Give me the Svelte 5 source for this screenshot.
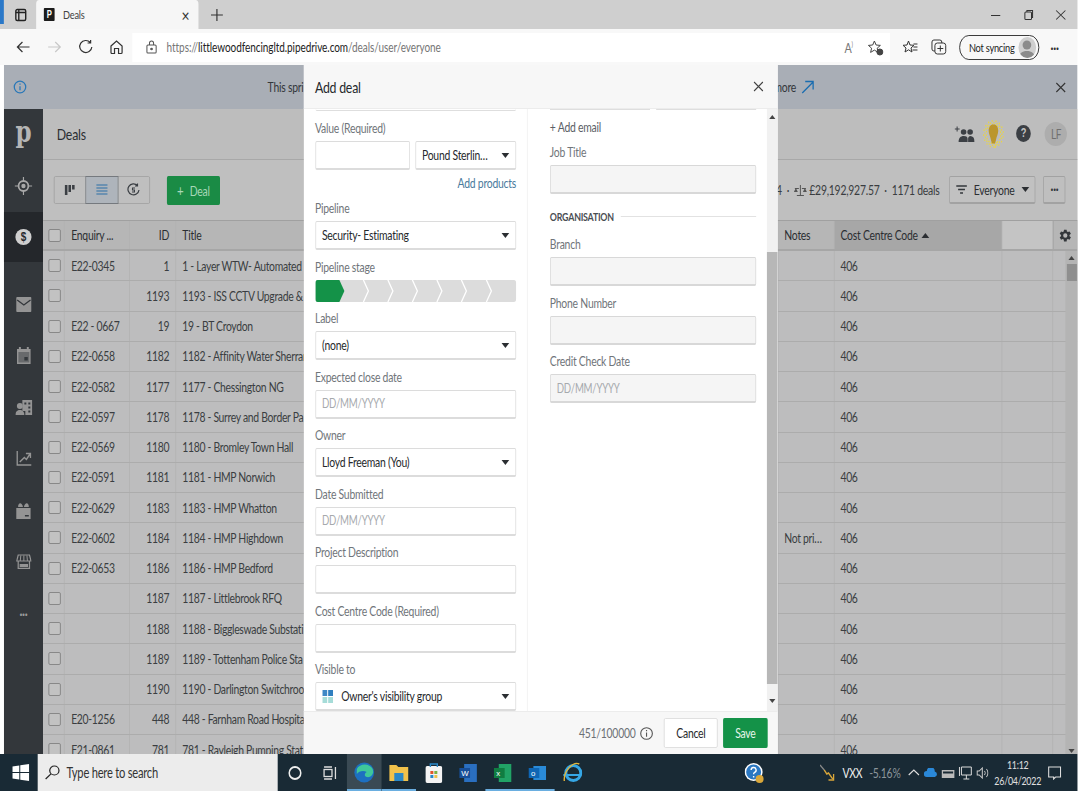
<script>
  // title text is only what shows beside the dialog
  const rows = [
    ['E22-0345', '1', '1 - Layer WTW- Automated G', ''],
    ['', '1193', '1193 - ISS CCTV Upgrade & C', ''],
    ['E22 - 0667', '19', '19 - BT Croydon', ''],
    ['E22-0658', '1182', '1182 - Affinity Water Sherrar', ''],
    ['E22-0582', '1177', '1177 - Chessington NG', ''],
    ['E22-0597', '1178', '1178 - Surrey and Border Pa', ''],
    ['E22-0569', '1180', '1180 - Bromley Town Hall', ''],
    ['E22-0591', '1181', '1181 - HMP Norwich', ''],
    ['E22-0629', '1183', '1183 - HMP Whatton', ''],
    ['E22-0602', '1184', '1184 - HMP Highdown', 'Not pri…'],
    ['E22-0653', '1186', '1186 - HMP Bedford', ''],
    ['', '1187', '1187 - Littlebrook RFQ', ''],
    ['', '1188', '1188 - Biggleswade Substati', ''],
    ['', '1189', '1189 - Tottenham Police Sta', ''],
    ['', '1190', '1190 - Darlington Switchroo', ''],
    ['E20-1256', '448', '448 - Farnham Road Hospita', ''],
    ['E21-0861', '781', '781 - Rayleigh Pumping Stat', '']
  ];
  // x of the white chevrons on the stage bar
  const chevrons = [53, 77.500, 102, 126.500, 151, 176];
  // speckled glow round the bulb
  const halo = [];
  for (let r = 9; r <= 14; r += 1.700) {
    for (let a = 0; a < 360; a += 22) {
      const t = (a + r * 7) * Math.PI / 180;
      halo.push({ x: 15 + Math.cos(t) * r, y: 15 + Math.sin(t) * r });
    }
  }
</script>

<div class="frame">
<div class="page">
  <div class="tabbar">
    <div class="tabs-btn">
      <svg width="18" height="14" preserveAspectRatio="none" viewBox="0 0 14 14" fill="none" stroke="#222" stroke-width="1.400"><rect x="2" y="1.500" width="10" height="11" rx="1.500"/><path d="M5 2v10M2 4.500h10"/></svg>
    </div>
    <div class="tab">
      <span class="favicon">P</span>
      <span class="tab-title">Deals</span>
      <span class="tab-x">×</span>
    </div>
    <svg class="plus" width="18" height="14" preserveAspectRatio="none" viewBox="0 0 14 14" stroke="#333" stroke-width="1.200"><path d="M7 1v12M1 7h12"/></svg>
    <div class="win">
      <svg width="16" height="12" preserveAspectRatio="none" viewBox="0 0 12 12" stroke="#333"><path d="M1 6.500h9"/></svg>
      <svg width="16" height="12" preserveAspectRatio="none" viewBox="0 0 12 12" fill="none" stroke="#333"><rect x="2.500" y="3" width="6.500" height="7.500" rx="1"/><path d="M4.500 3V1.500h5.500v7H9"/></svg>
      <svg width="16" height="12" preserveAspectRatio="none" viewBox="0 0 12 12" stroke="#333"><path d="M1.500 1.500l9 9M10.500 1.500l-9 9"/></svg>
    </div>
  </div>

  <div class="navbar">
    <div class="nav-icons">
      <svg width="21" height="16" preserveAspectRatio="none" viewBox="0 0 16 16" fill="none" stroke="#333" stroke-width="1.200"><path d="M14 8H2M7 3L2 8l5 5"/></svg>
      <svg width="21" height="16" preserveAspectRatio="none" viewBox="0 0 16 16" fill="none" stroke="#c8c8c8" stroke-width="1.200"><path d="M2 8h12M9 3l5 5-5 5"/></svg>
      <svg width="21" height="16" preserveAspectRatio="none" viewBox="0 0 16 16" fill="none" stroke="#333" stroke-width="1.200"><path d="M12.500 3.500A6 6 0 1 0 14 8M12.800 1v3h-3"/></svg>
      <svg width="21" height="16" preserveAspectRatio="none" viewBox="0 0 16 16" fill="none" stroke="#333" stroke-width="1.200"><path d="M2.500 7L8 2l5.500 5v6.500a1 1 0 0 1-1 1H10v-5H6v5H3.500a1 1 0 0 1-1-1z"/></svg>
    </div>
    <div class="address">
      <svg width="16" height="14" preserveAspectRatio="none" viewBox="0 0 12 14" fill="none" stroke="#555"><rect x="1.500" y="5" width="9" height="8" rx="1"/><path d="M4 5V3a2 2 0 0 1 4 0v2"/><circle cx="6" cy="9" r=".8" fill="#555"/></svg>
      <span class="url"><span class="dim">https://</span>littlewoodfencingltd.pipedrive.com<span class="dim">/deals/user/everyone</span></span>
      <div class="addr-right">
        <span class="read">A<sup>)</sup></span>
        <svg width="22" height="17" preserveAspectRatio="none" viewBox="0 0 17 17" fill="none" stroke="#444"><path d="M7.500 2l1.700 4 4.300.4-3.200 2.800 1 4.200-3.800-2.300-3.800 2.300 1-4.200L1.500 6.400l4.300-.4z"/><circle cx="13" cy="13" r="3" fill="#444"/></svg>
      </div>
    </div>
    <div class="nav-right">
      <svg width="22" height="17" preserveAspectRatio="none" viewBox="0 0 17 17" fill="none" stroke="#333"><path d="M7 2l1.500 4 4 .3-3 2.700 1 4-3.500-2.200L3.500 13l1-4-3-2.700 4-.3zM12 5h4M12 8h4M11 11h5"/></svg>
      <svg width="23" height="18" preserveAspectRatio="none" viewBox="0 0 18 18" fill="none" stroke="#333"><rect x="5" y="5" width="11" height="11" rx="2.500"/><path d="M5 13H4a2 2 0 0 1-2-2V4a2 2 0 0 1 2-2h6a2 2 0 0 1 2 2v1M10.500 7.500v6M7.500 10.500h6"/></svg>
      <div class="sync">
        <span>Not syncing</span>
        <span class="face">
          <svg width="20" height="20" preserveAspectRatio="none" viewBox="0 0 16 20" fill="#8b8b8b"><circle cx="8" cy="7" r="4.500"/><path d="M0 20c0-5 3-7 8-7s8 2 8 7z"/></svg>
        </span>
      </div>
      <span class="dots">···</span>
    </div>
  </div>

  <div class="app">
    <div class="banner">
      <svg class="info" width="18" height="14" preserveAspectRatio="none" viewBox="0 0 14 14" fill="none" stroke="#2a78b8" stroke-width="1.300"><circle cx="7" cy="7" r="5.800"/><path d="M7 6.200v4M7 3.500v1.200"/></svg>
      <div class="banner-msg">
        <span>This spri</span>
        <span class="more">more
          <svg width="18" height="14" preserveAspectRatio="none" viewBox="0 0 14 14" fill="none" stroke="#1a6db0" stroke-width="1.300"><path d="M1.500 13L12.500 2M4.500 1.500h8v8"/></svg>
        </span>
      </div>
      <svg class="banner-x" width="14" height="11" preserveAspectRatio="none" viewBox="0 0 11 11" stroke="#333" stroke-width="1.100"><path d="M1 1l9 9M10 1l-9 9"/></svg>
    </div>

    <div class="workspace">
      <nav class="sidebar">
        <div class="logo">p</div>
        <div class="side-item">
          <svg width="23" height="18" preserveAspectRatio="none" viewBox="0 0 18 18" fill="none" stroke="#a8a8a8" stroke-width="1.800"><circle cx="9" cy="9" r="5"/><circle cx="9" cy="9" r="1.300" fill="#a8a8a8"/><path d="M9 0v4M9 14v4M0 9h4M14 9h4" stroke-width="1.200"/></svg>
        </div>
        <div class="side-item active">
          <span class="dollar">$</span>
        </div>
        <div class="side-item after-active">
          <svg width="20" height="15" preserveAspectRatio="none" viewBox="0 0 15 15"><rect width="15" height="15" rx="1" fill="#949494"/><path d="M1 3l6.500 5L14 3" fill="none" stroke="#33373b" stroke-width="1.300"/></svg>
        </div>
        <div class="side-item">
          <svg width="18" height="17" preserveAspectRatio="none" viewBox="0 0 14 17"><path d="M0 2h14v15H0z" fill="#949494"/><path d="M3 0v3M11 0v3" stroke="#949494" stroke-width="2"/><rect x="1.500" y="5" width="11" height="10.500" fill="#33373b" opacity=".45"/><rect x="7.500" y="10" width="3.500" height="3.500" fill="#33373b"/></svg>
        </div>
        <div class="side-item">
          <svg width="22" height="15" preserveAspectRatio="none" viewBox="0 0 17 15" fill="#949494"><circle cx="4.500" cy="6" r="3"/><path d="M0 15c0-3.500 2-5 4.500-5S9 11.500 9 15z"/><path d="M7 0h10v15h-7v-4H7zM9 2.500v2h2v-2zM13 2.500v2h2v-2zM13 6.500v2h2v-2zM13 10.500v2h2v-2z" fill-rule="evenodd"/></svg>
        </div>
        <div class="side-item">
          <svg width="20" height="15" preserveAspectRatio="none" viewBox="0 0 15 15" fill="none" stroke="#949494" stroke-width="1.400"><path d="M1 0v14h14M3.500 11L8 6.500l2 2L13.500 3M9.500 2.500h4.500V7"/></svg>
        </div>
        <div class="side-item">
          <svg width="19" height="17" preserveAspectRatio="none" viewBox="0 0 15 17" fill="#949494"><path d="M0 6h15v11H0zM2 5c0-5 4-5 5 0zM8 5c1-5 5-5 5 0z"/><path d="M9 13h4v1.500H9z" fill="#33373b"/></svg>
        </div>
        <div class="side-item">
          <svg width="20" height="15" preserveAspectRatio="none" viewBox="0 0 15 15" fill="none" stroke="#949494" stroke-width="1.200"><path d="M2 1h11l1.500 6H.5zM2 7v7.400h11V7"/><path d="M4.500 1.500L4 7M7.500 1.500V7M10.500 1.500L11 7" stroke-width="1"/><path d="M4 10.500h7v2H4z" fill="#949494"/></svg>
        </div>
        <div class="side-item side-dots">···</div>
      </nav>

      <main class="main">
        <header class="head">
          <h1>Deals</h1>
          <div class="head-right">
            <svg width="26" height="16" preserveAspectRatio="none" viewBox="0 0 20 16" fill="#3b3f44"><path d="M0 3h5M2.500 .5v5" stroke="#3b3f44" fill="none"/><circle cx="9" cy="6" r="2.800"/><circle cx="15.500" cy="6" r="2.800"/><path d="M4 16c0-4 2-6 5-6s4 1 4 3v3zM13.500 16v-4c.5-1 1-2 2-2 3 0 4.500 2 4.500 6z"/></svg>
            <span class="bulb">
              <svg width="31" height="32" preserveAspectRatio="none" viewBox="0 0 30 30">
                {#each halo as d}
                  <circle cx={d.x} cy={d.y} r=".8" fill="#ecd63e"/>
                {/each}
                <path d="M15 6c-4 0-6 2.500-6 6 0 3 2 5 3 9l1 3h4l1-3c1-4 3-6 3-9 0-3.500-2-6-6-6z" fill="#bb962c"/>
              </svg>
            </span>
            <span class="help">?</span>
            <span class="avatar">LF</span>
          </div>
        </header>

        <div class="tools">
          <div class="views">
            <span class="view">
              <svg width="16" height="12" preserveAspectRatio="none" viewBox="0 0 12 12" fill="#3b3f44"><path d="M1 1h2.500v10H1zM4.500 1H7v7H4.500zM8 1h2.500v4.500H8z"/></svg>
            </span>
            <span class="view on">
              <svg width="17" height="12" preserveAspectRatio="none" viewBox="0 0 13 12" stroke="#2a6fa8" stroke-width="1.200"><path d="M1 1h11M1 4h11M1 7h11M1 10h11"/></svg>
            </span>
            <span class="view">
              <svg width="17" height="14" preserveAspectRatio="none" viewBox="0 0 13 14" fill="none" stroke="#3b3f44" stroke-width="1.200"><path d="M10.500 2.500A5.500 5.500 0 1 0 12 7M10.500 .5v2.500H8"/><path d="M8 5H5.500v2h2v2H5" stroke-width="1"/></svg>
            </span>
          </div>
          <button class="add-deal"><span>+</span> Deal</button>
          <div class="tools-right">
            <span class="sum">94 &nbsp;·&nbsp;
              <svg width="17" height="11" preserveAspectRatio="none" viewBox="0 0 13 11" fill="#555"><path d="M6 0h1v10h3v1H3v-1h3zM1 3h4v1H1zM8 3h4v1H8zM0 7l2-4 2 4zM9 7l2-4 2 4z"/></svg>
              £29,192,927.57 &nbsp;·&nbsp; 1171 deals</span>
            <span class="everyone">
              <svg width="14" height="9" preserveAspectRatio="none" viewBox="0 0 11 9" stroke="#33373b" stroke-width="1.400"><path d="M0 1h11M2 4.500h7M4 8h3"/></svg>
              Everyone
              <i class="caret"></i>
            </span>
            <span class="more-btn">···</span>
          </div>
        </div>

        <div class="table">
          <div class="row thead">
            <span class="c check"><i class="box"></i></span>
            <span class="c">Enquiry ...</span>
            <span class="c num">ID</span>
            <span class="c">Title</span>
            <span class="c">Notes</span>
            <span class="c sorted">Cost Centre Code <i class="up"></i></span>
            <span class="c blank"></span>
            <span class="c gear">
              <svg width="19" height="15" preserveAspectRatio="none" viewBox="0 0 24 24" fill="#33373b"><path d="M19.400 13a7.500 7.500 0 0 0 0-2l2.300-1.800-2.200-3.800-2.700 1.100a7.500 7.500 0 0 0-1.700-1L14.700 2.600h-4.400L9.900 5.500a7.500 7.500 0 0 0-1.700 1L5.500 5.400 3.300 9.200 5.600 11a7.500 7.500 0 0 0 0 2l-2.300 1.800 2.200 3.800 2.700-1.100a7.500 7.500 0 0 0 1.700 1l.4 2.900h4.400l.4-2.900a7.500 7.500 0 0 0 1.700-1l2.700 1.100 2.200-3.800zM12.500 15.500a3.500 3.500 0 1 1 0-7 3.500 3.500 0 0 1 0 7z"/></svg>
            </span>
          </div>
          {#each rows as r}
            <div class="row">
              <span class="c check"><i class="box"></i></span>
              <span class="c">{r[0]}</span>
              <span class="c num">{r[1]}</span>
              <span class="c">{r[2]}</span>
              <span class="c">{r[3]}</span>
              <span class="c">406</span>
              <span class="c"></span>
              <span class="c"></span>
            </div>
          {/each}
          <div class="table-scroll">
            <i class="arrow-up"></i>
            <b></b>
            <span class="grow"></span>
            <i class="arrow-down"></i>
          </div>
        </div>
      </main>
    </div>

    <!-- modal sits on top of the dimmed page -->
    <section class="modal">
      <div class="m-head">
        <h2>Add deal</h2>
        <svg width="14" height="11" preserveAspectRatio="none" viewBox="0 0 11 11" stroke="#444" stroke-width="1.100"><path d="M1 1l9 9M10 1l-9 9"/></svg>
      </div>
      <div class="m-body">
        <div class="col left">
          <div class="cut"></div>
          <div class="field first">
            <label>Value (Required)</label>
            <div class="pair">
              <span class="ctl value"></span>
              <span class="ctl select cur"><em>Pound Sterlin…</em><i class="caret"></i></span>
            </div>
          </div>
          <a class="add-products">Add products</a>
          <div class="field">
            <label>Pipeline</label>
            <span class="ctl select"><em>Security- Estimating</em><i class="caret"></i></span>
          </div>
          <div class="field">
            <label>Pipeline stage</label>
            <svg class="stages" width="100%" height="22" preserveAspectRatio="none" viewBox="0 0 201 22">
              <rect width="201" height="22" fill="#dcdcdc"/>
              <path d="M0 0h24l5 11-5 11H0z" fill="#149248"/>
              {#each chevrons as x}
                <path d="M{x - 5} 0l5 11-5 11" fill="none" stroke="#fff" stroke-width="1.300"/>
              {/each}
            </svg>
          </div>
          <div class="field">
            <label>Label</label>
            <span class="ctl select"><em>(none)</em><i class="caret"></i></span>
          </div>
          <div class="field">
            <label>Expected close date</label>
            <span class="ctl ph">DD/MM/YYYY</span>
          </div>
          <div class="field">
            <label>Owner</label>
            <span class="ctl select"><em>Lloyd Freeman (You)</em><i class="caret"></i></span>
          </div>
          <div class="field">
            <label>Date Submitted</label>
            <span class="ctl ph">DD/MM/YYYY</span>
          </div>
          <div class="field">
            <label>Project Description</label>
            <span class="ctl"></span>
          </div>
          <div class="field">
            <label>Cost Centre Code (Required)</label>
            <span class="ctl"></span>
          </div>
          <div class="field">
            <label>Visible to</label>
            <span class="ctl select">
              <svg class="vis" width="14" height="13" preserveAspectRatio="none" viewBox="0 0 11 13"><path d="M0 0h5v6H0z" fill="#3f88c5"/><path d="M6 0h5v6H6z" fill="#2f7fbf"/><path d="M0 7h5v6H0zM6 7h5v6H6z" fill="#a6dcd8"/></svg>
              <em>Owner's visibility group</em><i class="caret"></i>
            </span>
          </div>
        </div>
        <div class="col right">
          <div class="cut pair-cut"><span></span><span></span></div>
          <a class="add-email">+ Add email</a>
          <div class="field">
            <label>Job Title</label>
            <span class="ctl off"></span>
          </div>
          <div class="org"><span>ORGANISATION</span><i></i></div>
          <div class="field">
            <label>Branch</label>
            <span class="ctl off"></span>
          </div>
          <div class="field">
            <label>Phone Number</label>
            <span class="ctl off"></span>
          </div>
          <div class="field">
            <label>Credit Check Date</label>
            <span class="ctl off ph">DD/MM/YYYY</span>
          </div>
        </div>
        <div class="m-scroll">
          <i class="arrow-up"></i>
          <b></b>
          <i class="arrow-down"></i>
        </div>
      </div>
      <div class="m-foot">
        <span class="count">451/100000</span>
        <svg width="17" height="13" preserveAspectRatio="none" viewBox="0 0 13 13" fill="none" stroke="#555" stroke-width="1.100"><circle cx="6.500" cy="6.500" r="5.800"/><path d="M6.500 5.500v4.200M6.500 3v1.300"/></svg>
        <button class="cancel">Cancel</button>
        <button class="save">Save</button>
      </div>
    </section>
  </div>

  <footer class="taskbar">
    <span class="start">
      <svg width="22" height="17" preserveAspectRatio="none" viewBox="0 0 17 17" fill="#fff"><path d="M0 2.500l7-1v6.500H0zM8 1.300L17 0v8H8zM0 9h7v6.500l-7-1zM8 9h9v8l-9-1.300z"/></svg>
    </span>
    <div class="search">
      <svg width="20" height="15" preserveAspectRatio="none" viewBox="0 0 15 15" fill="none" stroke="#222" stroke-width="1.200"><circle cx="9.500" cy="5.500" r="4.500"/><path d="M6.200 8.800L1 14"/></svg>
      <span>Type here to search</span>
    </div>
    <span class="tb cortana"><i></i></span>
    <span class="tb">
      <svg width="18" height="14" preserveAspectRatio="none" viewBox="0 0 14 14" fill="none" stroke="#ddd" stroke-width="1.300"><rect x="1" y="3.500" width="8" height="7"/><path d="M1 1h8M1 13h8M12.500 1v12"/></svg>
    </span>
    <span class="tb pinned running">
      <svg width="27" height="21" preserveAspectRatio="none" viewBox="0 0 21 21"><circle cx="10.500" cy="10.500" r="10" fill="#1d6fc0"/><path d="M3 7c3-6 13-6 16 0 2 5-2 9-6 8-3-1-2-4 0-5-3-2-8-1-10 2z" fill="#3fc79a"/></svg>
    </span>
    <span class="tb running">
      <svg width="25" height="17" preserveAspectRatio="none" viewBox="0 0 19 17"><path d="M0 1h7l2 2h10v14H0z" fill="#f1c24b"/><path d="M5 9h9v8H5z" fill="#2a88c8"/></svg>
    </span>
    <span class="tb">
      <svg width="22" height="20" preserveAspectRatio="none" viewBox="0 0 17 20"><rect y="3" width="17" height="17" rx="2" fill="#f4f4f4"/><path d="M5 4V1h7v3" fill="none" stroke="#2a88c8" stroke-width="1.400"/><path d="M5 8h3v3H5z" fill="#e2552b"/><path d="M9 8h3v3H9z" fill="#7cb342"/><path d="M5 12h3v3H5z" fill="#2a88c8"/><path d="M9 12h3v3H9z" fill="#f1c24b"/></svg>
    </span>
    <span class="tb">
      <svg width="23" height="18" preserveAspectRatio="none" viewBox="0 0 18 18"><path d="M5 0h13v18H5z" fill="#2a6fc0"/><rect y="4" width="11" height="10" fill="#174e98"/><text x="2" y="12" font-size="8" fill="#fff" font-family="Liberation Sans">W</text></svg>
    </span>
    <span class="tb running">
      <svg width="23" height="18" preserveAspectRatio="none" viewBox="0 0 18 18"><path d="M5 0h13v18H5z" fill="#21a366"/><rect y="4" width="11" height="10" fill="#107c41"/><text x="2.500" y="12" font-size="8" fill="#fff" font-family="Liberation Sans">x</text></svg>
    </span>
    <span class="tb running">
      <svg width="23" height="18" preserveAspectRatio="none" viewBox="0 0 18 18"><path d="M5 2h13v14H5z" fill="#2a8bd8"/><rect y="4" width="11" height="10" fill="#0f66b4"/><text x="2.500" y="12" font-size="8" fill="#fff" font-family="Liberation Sans">o</text></svg>
    </span>
    <span class="tb">
      <svg width="26" height="22" preserveAspectRatio="none" viewBox="0 0 20 22"><circle cx="11" cy="11" r="7.500" fill="none" stroke="#35a7e6" stroke-width="3"/><path d="M1 13h18" stroke="#35a7e6" stroke-width="2"/><path d="M17 2C11-1 1 9 2 19" fill="none" stroke="#e3b53a" stroke-width="1.400"/></svg>
    </span>
    <span class="tb-help">
      <svg width="26" height="22" preserveAspectRatio="none" viewBox="0 0 20 22"><circle cx="9" cy="10" r="9" fill="#fff"/><circle cx="9" cy="10" r="7.500" fill="#2b78c2"/><path d="M6.500 8a2.500 2.500 0 1 1 3.500 2.300c-1 .5-1 1-1 2M9 14v1.500" stroke="#fff" stroke-width="1.400" fill="none"/><circle cx="15" cy="17" r="4" fill="#d9a73a"/></svg>
    </span>
    <div class="tray">
      <span class="stock">
        <svg width="21" height="17" preserveAspectRatio="none" viewBox="0 0 19 17" fill="none" stroke-width="1.500"><path d="M0 1l5 5" stroke="#888"/><path d="M5 6l3 4 2-1 5 6" stroke="#d9a73a"/><path d="M16 10v6h-6" stroke="#d9a73a"/></svg>
        <b>VXX</b><small>-5.16%</small>
      </span>
      <svg class="t-up" width="16" height="7" preserveAspectRatio="none" viewBox="0 0 12 7" fill="none" stroke="#ddd" stroke-width="1.100"><path d="M1 6l5-5 5 5"/></svg>
      <svg width="18" height="9" preserveAspectRatio="none" viewBox="0 0 14 9" fill="#2a88d8"><path d="M3 9a3 3 0 0 1 0-6 4 4 0 0 1 8 .5A2.800 2.800 0 0 1 11 9z"/></svg>
      <svg width="17" height="10" preserveAspectRatio="none" viewBox="0 0 13 10"><rect y="2" width="13" height="8" fill="#bbb"/><rect x="1.500" y="3.500" width="10" height="2" fill="#1a2a35"/></svg>
      <svg width="18" height="14" preserveAspectRatio="none" viewBox="0 0 14 14" fill="none" stroke="#ddd"><path d="M3 1h10v8H3zM8 9v4M5 13h6M1 1v9"/></svg>
      <svg width="16" height="12" preserveAspectRatio="none" viewBox="0 0 12 12" fill="none" stroke="#ccc"><path d="M1 4h2l3-3v10L3 8H1zM8 4c1 1 1 3 0 4M10 2c2 2 2 6 0 8"/></svg>
      <span class="clock"><span>11:12</span><span>26/04/2022</span></span>
      <svg class="notif" width="18" height="14" preserveAspectRatio="none" viewBox="0 0 14 14" fill="none" stroke="#ddd" stroke-width="1.100"><path d="M1 1h12v10H8l-2 2v-2H1z"/></svg>
    </div>
  </footer>
</div>
</div>

<style>
  :global(body) {
    margin: 0;
    background: #fff;
  }
  /* the capture is squeezed sideways, so the page is laid out wider and scaled down */
  .frame {
    width: 1078px;
    height: 791px;
    overflow: hidden;
  }
  .page {
    width: 1401.400px;
    height: 791px;
    transform: scaleX(0.76923);
    transform-origin: 0 0;
    display: flex;
    flex-direction: column;
    overflow: hidden;
    font-family: Lato, "Open Sans", sans-serif;
    font-size: 13.500px;
    letter-spacing: -0.3px;
    color: #33373b;
    background: #fff;
  }
  i, em { font-style: normal; }

  .tabbar {
    height: 29px;
    flex: none;
    display: flex;
    align-items: center;
    background: #cfcfcf;
  }
  .tabs-btn {
    width: 47px;
    height: 29px;
    padding-left: 18px;
    box-sizing: border-box;
    display: flex;
    align-items: center;
    background: linear-gradient(#2a78c8, #2a78c8) no-repeat 0 0 / 5px 24px;
  }
  .tab {
    width: 211px;
    height: 29px;
    display: flex;
    align-items: center;
    box-sizing: border-box;
    padding: 0 6px 0 10px;
    background: #f6f6f6;
    border-radius: 4px 4px 0 0;
    font-size: 12px;
    color: #444;
  }
  .favicon {
    width: 14px;
    height: 13px;
    background: #1c1c1c;
    color: #fff;
    font: bold 10px/13px "Liberation Sans", sans-serif;
    text-align: center;
    margin-right: 11px;
    border-radius: 1px;
  }
  .tab-title { flex: 1; }
  .tab-x { font-size: 18px; color: #333; width: 16px; }
  .plus { margin-left: 15px; }
  .win {
    margin-left: auto;
    display: flex;
    gap: 26px;
    padding-right: 14px;
  }

  .navbar {
    height: 36px;
    flex: none;
    display: flex;
    align-items: center;
    background: #f8f8f8;
  }
  .nav-icons {
    display: flex;
    gap: 19.500px;
    padding-left: 19.500px;
    width: 171.600px;
    box-sizing: border-box;
    flex: none;
  }
  .address {
    width: 985px;
    height: 29px;
    flex: none;
    display: flex;
    align-items: center;
    gap: 12px;
    box-sizing: border-box;
    padding: 0 8px 0 17px;
    background: #fff;
  }
  .url { font-size: 13px; letter-spacing: -0.08px; color: #222; }
  .url .dim { color: #767676; }
  .addr-right {
    margin-left: auto;
    display: flex;
    align-items: center;
    gap: 18px;
  }
  .read { color: #777; font-size: 14px; }
  .read sup { font-size: 7px; }
  .nav-right {
    display: flex;
    align-items: center;
    gap: 15px;
    padding-left: 15px;
    flex: 1;
  }
  .sync {
    width: 104px;
    height: 25px;
    flex: none;
    box-sizing: border-box;
    border: 1px solid #222;
    border-radius: 13px;
    display: flex;
    align-items: center;
    justify-content: space-between;
    padding: 0 3px 0 12px;
    font-size: 12px;
    color: #222;
    white-space: nowrap;
  }
  .face {
    width: 23px;
    height: 21px;
    border-radius: 50%;
    background: #cfcfcf;
    overflow: hidden;
    display: flex;
    justify-content: center;
    align-items: flex-end;
  }
  .dots { font-weight: bold; font-size: 14px; color: #333; }

  .app {
    position: relative;
    flex: 1;
    min-height: 0;
    margin-left: 5.200px;
    display: flex;
    flex-direction: column;
    overflow: hidden;
  }
  .banner {
    height: 44px;
    flex: none;
    display: flex;
    align-items: center;
    background: #a9aeb6;
    padding-left: 11.700px;
    color: #33373b;
  }
  .banner-msg {
    margin-left: 313px;
    width: 711px;
    display: flex;
    justify-content: space-between;
  }
  .more {
    display: inline-flex;
    align-items: center;
    gap: 6px;
  }
  .banner-x { margin-left: auto; margin-right: 15px; }

  .workspace {
    flex: 1;
    min-height: 0;
    display: flex;
  }
  .sidebar {
    width: 50.700px;
    flex: none;
    background: #33373b;
    display: flex;
    flex-direction: column;
    align-items: stretch;
  }
  .logo {
    height: 51px;
    text-align: center;
    font: bold 30px/46px "DejaVu Serif", serif;
    color: #b5b5b5;
  }
  .side-item {
    height: 51.500px;
    flex: none;
    display: flex;
    align-items: center;
    justify-content: center;
  }
  .side-item.active {
    background: #24272b;
    height: 50px;
  }
  .after-active { margin-top: 17px; }
  .dollar {
    width: 21px;
    height: 16px;
    border-radius: 50%;
    background: #cfcfcf;
    color: #24272b;
    font: bold 13px/16px "Liberation Sans", sans-serif;
    text-align: center;
  }
  .side-dots { color: #9a9a9a; font-weight: bold; font-size: 14px; }

  .main {
    flex: 1;
    min-width: 0;
    display: flex;
    flex-direction: column;
    background: #bfbfbf;
  }
  .head {
    height: 51px;
    flex: none;
    display: flex;
    align-items: center;
    box-sizing: border-box;
    padding: 0 14px 1px 18px;
    background: #bdbdbd;
    border-bottom: 1px solid #a8a8a8;
  }
  h1 {
    margin: 0;
    font-size: 16px;
    font-weight: normal;
    color: #2b2e32;
  }
  .head-right {
    margin-left: auto;
    display: flex;
    align-items: center;
  }
  .bulb {
    margin-left: 9px;
    width: 31px;
    height: 32px;
    display: flex;
  }
  .help {
    margin-left: 14px;
    width: 19.500px;
    height: 17px;
    border-radius: 50%;
    background: #3b3f44;
    color: #c5c5c5;
    font: bold 12px/17px "Liberation Sans", sans-serif;
    text-align: center;
  }
  .avatar {
    margin-left: 18px;
    width: 29px;
    height: 24px;
    border-radius: 50%;
    background: #adadad;
    color: #707070;
    font-size: 13px;
    line-height: 24px;
    text-align: center;
  }

  .tools {
    height: 60px;
    flex: none;
    display: flex;
    align-items: center;
    box-sizing: border-box;
    padding: 0 16px 0 14px;
    background: #bfbfbf;
  }
  .views {
    display: flex;
    height: 28px;
    border: 1px solid #a2a2a2;
    border-radius: 2px;
    box-sizing: border-box;
  }
  .view {
    width: 41px;
    display: flex;
    align-items: center;
    justify-content: center;
  }
  .view.on {
    background: #aeb4bb;
    outline: 1px solid #75797e;
  }
  .add-deal {
    margin-left: 22px;
    width: 69px;
    height: 29px;
    border: 0;
    border-radius: 2px;
    padding: 0;
    background: #1a8b45;
    color: #a8d8b8;
    font: inherit;
    letter-spacing: inherit;
  }
  .add-deal span { margin-right: 5px; font-size: 15px; }
  .tools-right {
    margin-left: auto;
    display: flex;
    align-items: center;
  }
  .sum {
    color: #3a3d41;
    display: inline-flex;
    align-items: center;
    gap: 3px;
    white-space: nowrap;
  }
  .everyone {
    margin-left: 13px;
    width: 112px;
    height: 28px;
    box-sizing: border-box;
    border: 1px solid #a2a2a2;
    border-bottom-width: 2px;
    border-radius: 2px;
    display: flex;
    align-items: center;
    justify-content: center;
    gap: 9px;
    color: #2b2e32;
    background: #c1c1c1;
  }
  .more-btn {
    margin-left: 10px;
    width: 29px;
    height: 28px;
    box-sizing: border-box;
    border: 1px solid #a2a2a2;
    border-bottom-width: 2px;
    border-radius: 2px;
    text-align: center;
    line-height: 24px;
    font-weight: bold;
  }
  .caret {
    display: inline-block;
    flex: none;
    width: 0;
    height: 0;
    border-left: 5px solid transparent;
    border-right: 5px solid transparent;
    border-top: 5px solid #2b2e32;
  }

  .table {
    position: relative;
    flex: 1;
    min-height: 0;
    overflow: hidden;
    background: #bdbdbe;
  }
  .row {
    display: grid;
    grid-template-columns: 28.600px 84.500px 60px 782.600px 73px 218px 66px 32.800px;
    height: 30.250px;
    box-sizing: border-box;
    border-bottom: 1px solid #acacac;
    letter-spacing: -0.4px;
    color: #3a3d41;
  }
  .row.thead {
    height: 31px;
    background: #b6b6b6;
    border-top: 1px solid #a0a0a0;
    border-bottom: 2px solid #a6a6a6;
    letter-spacing: -0.3px;
    color: #2b2e32;
  }
  .c {
    display: flex;
    align-items: center;
    padding: 0 8px;
    box-sizing: border-box;
    border-right: 1px solid #b2b2b2;
    white-space: nowrap;
    overflow: hidden;
    min-width: 0;
  }
  .c.num { justify-content: flex-end; }
  .c.check { padding: 0 0 0 7px; }
  .c.sorted { background: #a7a7a7; gap: 5px; }
  .c.blank { background: #c4c4c4; }
  .c.gear { padding: 0; justify-content: center; border-left: 1px solid #a6a6a6; }
  .box {
    width: 14px;
    height: 11px;
    border: 1px solid #808080;
    border-radius: 2px;
    flex: none;
    background: #c2c2c2;
  }
  .up {
    width: 0;
    height: 0;
    border-left: 5px solid transparent;
    border-right: 5px solid transparent;
    border-bottom: 5px solid #2b2e32;
  }
  .table-scroll {
    position: absolute;
    right: 0;
    top: 31px;
    bottom: 0;
    width: 16px;
    background: #b4b4b4;
    display: flex;
    flex-direction: column;
    align-items: center;
    padding: 5px 0 1px;
    box-sizing: border-box;
  }
  .table-scroll b {
    width: 13px;
    height: 17px;
    margin-top: 4px;
    background: #8f8f8f;
  }
  .grow { flex: 1; }
  .arrow-up, .arrow-down {
    width: 0;
    height: 0;
    flex: none;
    border-left: 4.500px solid transparent;
    border-right: 4.500px solid transparent;
  }
  .arrow-up { border-bottom: 4px solid #444; }
  .arrow-down { border-top: 4px solid #444; }

  .modal {
    position: absolute;
    left: 390px;
    top: 0;
    bottom: 0;
    width: 616px;
    display: flex;
    flex-direction: column;
    background: #fff;
    z-index: 2;
  }
  .m-head {
    height: 44px;
    flex: none;
    display: flex;
    align-items: center;
    justify-content: space-between;
    box-sizing: border-box;
    padding: 0 18px 0 14.300px;
    background: #f7f7f7;
    border-bottom: 1px solid #ececec;
  }
  h2 {
    margin: 0;
    font-size: 16px;
    font-weight: normal;
    color: #26292c;
  }
  .m-body {
    flex: 1;
    min-height: 0;
    display: flex;
    overflow: hidden;
  }
  .col { overflow: hidden; box-sizing: border-box; }
  .col.left {
    width: 291px;
    padding: 0 14.350px;
    border-right: 1px solid #f0f0f0;
    flex: none;
  }
  .col.right {
    width: 311px;
    flex: none;
    padding: 0 14.300px 0 28.600px;
  }
  .cut {
    height: 1px;
    border-bottom: 1px solid #dedede;
    border-radius: 0 0 2px 2px;
  }
  .pair-cut {
    display: flex;
    gap: 8px;
    border: 0;
  }
  .pair-cut span {
    flex: 1;
    border-bottom: 1px solid #dedede;
  }
  .field { margin-bottom: 6.500px; }
  .field.first { margin: 7px 0 0; }
  label {
    display: block;
    height: 20px;
    line-height: 20px;
    margin-bottom: 3px;
    color: #70757a;
  }
  .ctl {
    display: flex;
    align-items: center;
    height: 29px;
    box-sizing: border-box;
    border: 1px solid #dcdcdc;
    border-bottom-width: 2px;
    border-radius: 2px;
    padding: 0 8px;
    background: #fff;
    color: #26292c;
  }
  .ctl em { flex: 1; white-space: nowrap; min-width: 0; }
  .ctl.ph { color: #a6a9ad; font-size: 12.500px; }
  .ctl.off { background: #f5f5f5; border-color: #d8d8d8; }
  .pair { display: flex; gap: 6.500px; }
  .value { width: 123.500px; flex: none; }
  .cur { flex: 1; min-width: 0; }
  .cur em { overflow: hidden; }
  .add-products {
    display: block;
    height: 20px;
    line-height: 20px;
    margin: 3px 0 5px;
    text-align: right;
    color: #4a7a9c;
  }
  .stages {
    display: block;
    border-radius: 3px;
  }
  .vis { margin: 0 11px 0 0; flex: none; }
  .add-email {
    display: block;
    margin-top: 7px;
    height: 20px;
    line-height: 20px;
    color: #5b6066;
  }
  .col.right .field { margin-top: 6.500px; margin-bottom: 0; }
  .col.right .add-email + .field { margin-top: 5px; }
  .org {
    display: flex;
    align-items: center;
    gap: 9px;
    height: 16px;
    margin: 14px 0 10px;
    font-size: 11.500px;
    font-weight: bold;
    color: #4a4e53;
  }
  .org i {
    flex: 1;
    height: 1px;
    background: #e2e2e2;
  }
  .m-scroll {
    width: 14px;
    flex: none;
    margin-left: auto;
    background: #f1f1f1;
    display: flex;
    flex-direction: column;
    align-items: center;
    padding: 6px 0 5px;
    box-sizing: border-box;
  }
  .m-scroll b {
    width: 14px;
    height: 432px;
    margin: 133px 0 15px;
    background: #b7b7b7;
    flex: none;
  }
  .m-foot {
    height: 43px;
    flex: none;
    display: flex;
    align-items: center;
    justify-content: flex-end;
    box-sizing: border-box;
    padding: 0 13px 0 0;
    background: #f7f7f7;
    border-top: 1px solid #ececec;
  }
  .count { color: #6c7075; margin-right: 6px; }
  .m-foot button {
    height: 30px;
    border-radius: 2px;
    font: inherit;
    letter-spacing: inherit;
    padding: 0;
  }
  .cancel {
    width: 70px;
    margin-left: 14px;
    background: #fff;
    border: 1px solid #dcdcdc;
    color: #26292c;
  }
  .save {
    width: 58.500px;
    margin-left: 6.500px;
    background: #149248;
    border: 0;
    color: #e6f5ea;
    font-weight: bold;
  }

  .taskbar {
    height: 37px;
    flex: none;
    display: flex;
    align-items: center;
    background: #192a35;
    color: #e8e8e8;
  }
  .start {
    width: 49.400px;
    display: flex;
    justify-content: center;
    flex: none;
    padding-left: 5px;
    box-sizing: border-box;
  }
  .search {
    width: 312px;
    height: 37px;
    flex: none;
    display: flex;
    align-items: center;
    gap: 8px;
    box-sizing: border-box;
    padding-left: 9px;
    background: #ececec;
    color: #333;
    font-size: 14.500px;
  }
  .tb {
    width: 45px;
    height: 37px;
    flex: none;
    display: flex;
    align-items: center;
    justify-content: center;
  }
  .cortana i {
    width: 13px;
    height: 10px;
    border: 2px solid #eee;
    border-radius: 50%;
  }
  .pinned { background: #3a4a54; }
  .running { box-shadow: inset 0 -2px 0 #6aaee0; }
  .tb-help { margin-left: 202px; width: 26px; display: flex; }
  .tray {
    margin-left: auto;
    display: flex;
    align-items: center;
    gap: 5px;
    padding-right: 21px;
  }
  .stock {
    display: flex;
    align-items: center;
    gap: 8px;
    font-size: 13.500px;
    margin-right: 4px;
  }
  .stock b { font-weight: normal; color: #f0f0f0; }
  .stock small { font-size: 13.500px; color: #8c959b; margin-left: 1px; }
  .clock {
    display: flex;
    flex-direction: column;
    align-items: center;
    font-size: 11.500px;
    line-height: 16px;
    color: #e0e0e0;
    margin-left: 3px;
  }
  .notif { margin-left: 4px; }
</style>
